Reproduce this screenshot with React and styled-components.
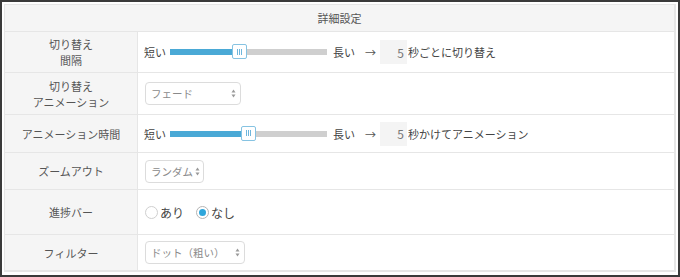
import React from "react";
import styled, { createGlobalStyle } from "styled-components";

const Global = createGlobalStyle`
  html, body { margin: 0; padding: 0; background: #fff; }
  body { font-family: "Noto Sans CJK JP", "Noto Sans", sans-serif; }
`;

const Frame = styled.div`
  box-sizing: border-box;
  width: 680px;
  height: 277px;
  border: 2px solid #3a3a3a;
  padding: 2px;
  background: #fff;
`;

const Table = styled.div`
  width: 672px;
  box-sizing: border-box;
  border: 1px solid #e6e6e6;
  border-right-width: 2px;
  border-bottom-width: 2px;
  font-size: 11px;
  color: #444;
  white-space: nowrap;
`;

const Header = styled.div`
  height: 26px;
  background: #f5f5f5;
  display: flex;
  align-items: center;
  justify-content: center;
  color: #555;
`;

const Row = styled.div`
  display: grid;
  grid-template-columns: 133px 1fr;
  height: ${(p) => p.$h}px;
  border-top: 1px solid #e6e6e6;
`;

const Label = styled.div`
  background: #f5f5f5;
  border-right: 1px solid #e6e6e6;
  display: flex;
  align-items: center;
  justify-content: center;
  text-align: center;
  line-height: 16px;
  color: #555;
`;

const Cell = styled.div`
  display: flex;
  align-items: center;
  padding-left: 6px;
`;

const SliderWrap = styled.div`
  position: relative;
  width: 157px;
  height: 6px;
  margin: 0 6px 0 4px;
  background: #cfcfcf;
  flex-shrink: 0;
`;

const Fill = styled.div`
  position: absolute;
  left: 0;
  top: 0;
  bottom: 0;
  background: #4aa9d6;
`;

const Thumb = styled.div`
  position: absolute;
  top: -5px;
  width: 15px;
  height: 15px;
  box-sizing: border-box;
  border: 1px solid #86c3e2;
  border-radius: 2px;
  background: #fff;
  display: flex;
  align-items: center;
  justify-content: center;
  gap: 1px;
  &::before, &::after, & > i {
    content: "";
    display: block;
    width: 1px;
    height: 6px;
    background: #6fb6dc;
  }
`;

const Arrow = styled.span`
  margin: 0 4px 0 10px;
  color: #555;
`;

const NumBox = styled.div`
  width: 27px;
  height: 24px;
  background: #f4f4f4;
  display: flex;
  align-items: center;
  justify-content: flex-end;
  padding-right: 3px;
  box-sizing: border-box;
  color: #777;
  font-size: 12px;
  margin-right: 1px;
  flex-shrink: 0;
`;

const Select = styled.div`
  box-sizing: border-box;
  width: ${(p) => p.$w}px;
  height: 23px;
  margin-left: 1px;
  border: 1px solid #dcdcdc;
  border-radius: 4px;
  display: flex;
  align-items: center;
  justify-content: space-between;
  gap: 2px;
  padding: 0 4px 0 5px;
  color: #8a8a8a;
  background: #fff;
  font-size: 10.5px;
  flex-shrink: 0;
  & > svg { flex-shrink: 0; }
`;

const RadioCircle = styled.span`
  box-sizing: border-box;
  width: 13px;
  height: 13px;
  border-radius: 50%;
  border: 1px solid ${(p) => (p.$on ? "#b5b5b5" : "#cfcfcf")};
  background: #fff;
  display: inline-flex;
  align-items: center;
  justify-content: center;
  margin-right: 2px;
  &::after {
    content: "";
    display: ${(p) => (p.$on ? "block" : "none")};
    width: 7px;
    height: 7px;
    border-radius: 50%;
    background: #2fa6db;
  }
`;

const RadioLabel = styled.label`
  display: inline-flex;
  align-items: center;
  margin-right: 11px;
  margin-left: 1px;
  color: #444;
  font-size: 12px;
`;

const UpDown = () => (
  <svg width="5" height="9" viewBox="0 0 5 9">
    <path d="M2.5 0.5 L4.5 3.5 L0.5 3.5 Z" fill="#999" />
    <path d="M2.5 8.5 L4.5 5.5 L0.5 5.5 Z" fill="#999" />
  </svg>
);

const Slider = ({ pos }) => (
  <SliderWrap>
    <Fill style={{ width: pos }} />
    <Thumb style={{ left: pos - 3 }}>
      <i />
    </Thumb>
  </SliderWrap>
);

export default function App() {
  return (
    <>
      <Global />
      <Frame>
        <Table>
          <Header>詳細設定</Header>
          <Row $h={40}>
            <Label>
              切り替え
              <br />
              間隔
            </Label>
            <Cell>
              短い
              <Slider pos={65} />
              長い
              <Arrow>→</Arrow>
              <NumBox>5</NumBox>
              秒ごとに切り替え
            </Cell>
          </Row>
          <Row $h={41}>
            <Label>
              切り替え
              <br />
              アニメーション
            </Label>
            <Cell>
              <Select $w={96}>
                フェード
                <UpDown />
              </Select>
            </Cell>
          </Row>
          <Row $h={37}>
            <Label>アニメーション時間</Label>
            <Cell>
              短い
              <Slider pos={74} />
              長い
              <Arrow>→</Arrow>
              <NumBox>5</NumBox>
              秒かけてアニメーション
            </Cell>
          </Row>
          <Row $h={36}>
            <Label>ズームアウト</Label>
            <Cell>
              <Select $w={59}>
                ランダム
                <UpDown />
              </Select>
            </Cell>
          </Row>
          <Row $h={44}>
            <Label>進捗バー</Label>
            <Cell>
              <RadioLabel>
                <RadioCircle />
                あり
              </RadioLabel>
              <RadioLabel>
                <RadioCircle $on />
                なし
              </RadioLabel>
            </Cell>
          </Row>
          <Row $h={35}>
            <Label>フィルター</Label>
            <Cell>
              <Select $w={100}>
                ドット（粗い）
                <UpDown />
              </Select>
            </Cell>
          </Row>
        </Table>
      </Frame>
    </>
  );
}
